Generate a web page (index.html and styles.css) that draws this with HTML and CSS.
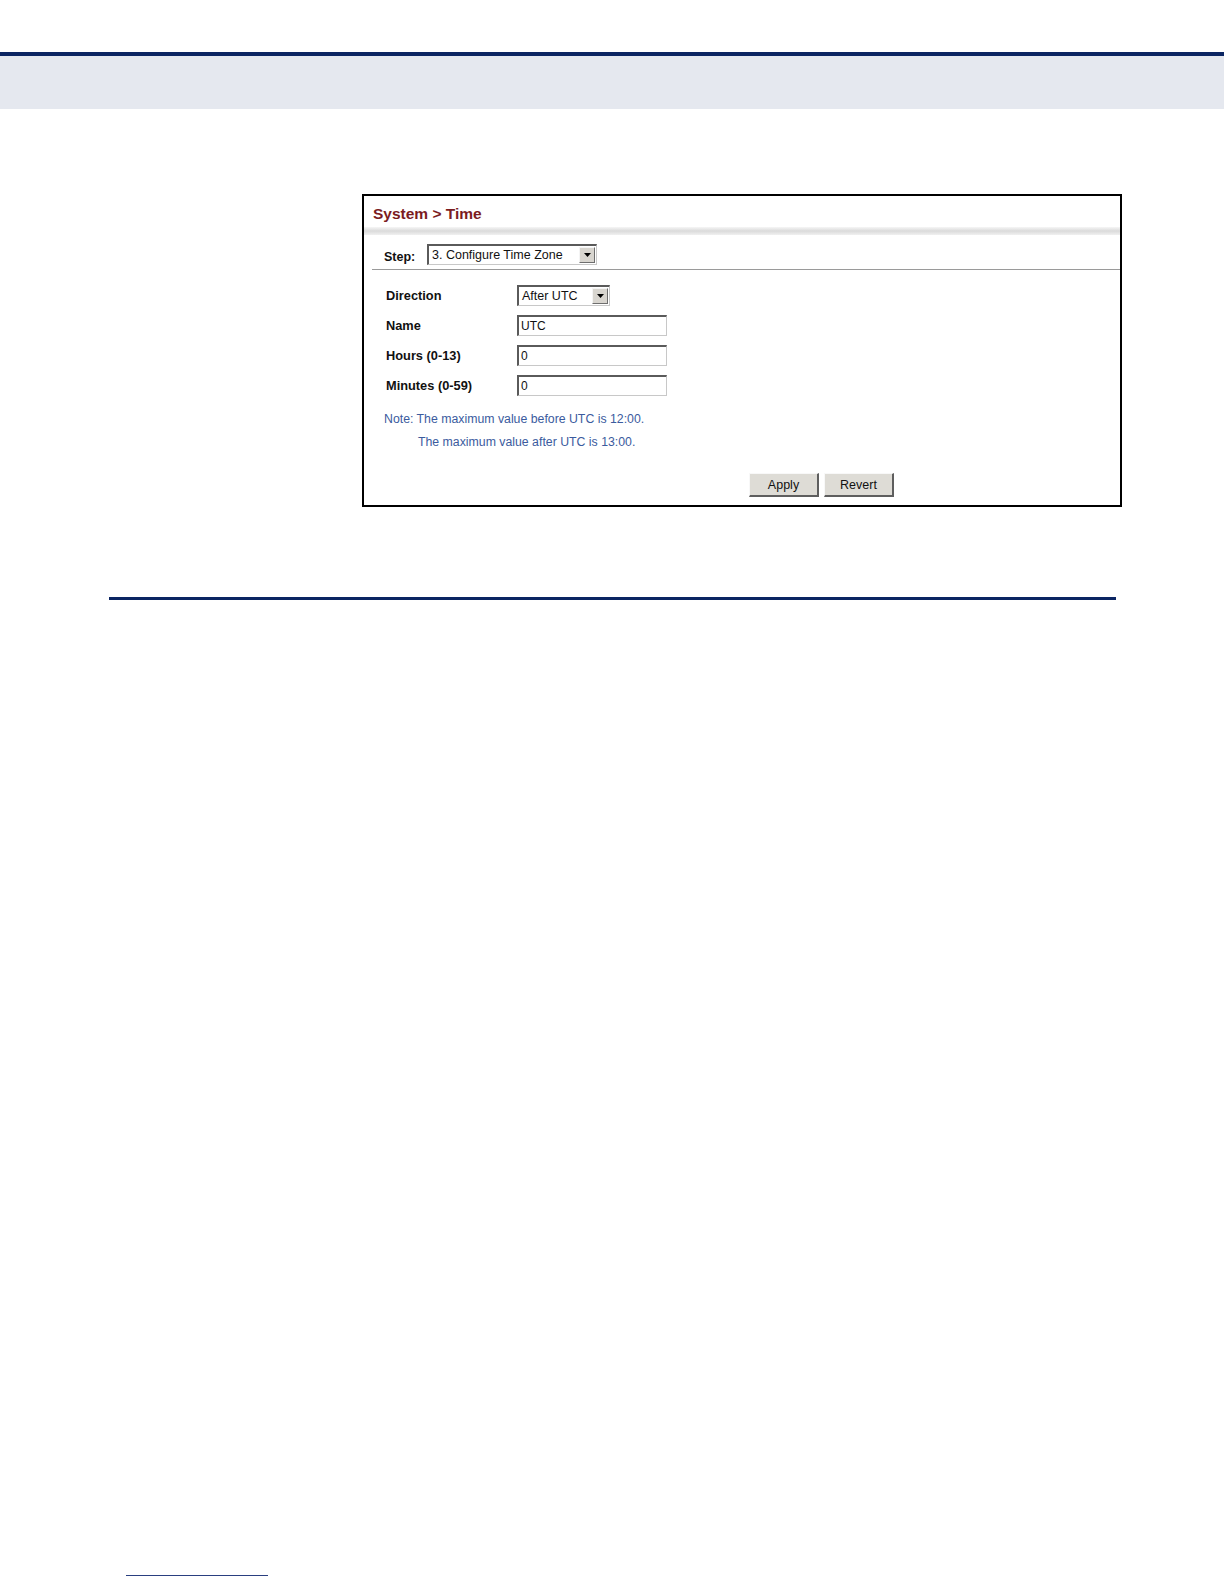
FILE: index.html
```html
<!DOCTYPE html>
<html>
<head>
<meta charset="utf-8">
<title>System &gt; Time</title>
<link rel="stylesheet" href="styles.css">
</head>
<body>
<header class="page-header">
  <div class="header-band"></div>
</header>
<main class="content">
  <div class="figure">
    <div class="panel-title">System &gt; Time</div>
    <div class="title-band"></div>
    <div class="step-row">
      <span class="step-label">Step:</span>
      <div class="select step-select">
        <span class="select-text">3. Configure Time Zone</span>
        <span class="select-btn"><svg width="7" height="4" viewBox="0 0 7 4"><path d="M0 0H7L3.5 4Z" fill="#000"/></svg></span>
      </div>
    </div>
    <div class="divider"></div>
    <div class="form">
      <div class="form-label">Direction</div>
      <div class="select dir-select">
        <span class="select-text">After UTC</span>
        <span class="select-btn"><svg width="7" height="4" viewBox="0 0 7 4"><path d="M0 0H7L3.5 4Z" fill="#000"/></svg></span>
      </div>
      <div class="form-label">Name</div>
      <div class="input">UTC</div>
      <div class="form-label">Hours (0-13)</div>
      <div class="input">0</div>
      <div class="form-label">Minutes (0-59)</div>
      <div class="input">0</div>
    </div>
    <div class="note">
      <div class="note-line">Note: The maximum value before UTC is 12:00.</div>
      <div class="note-line indent">The maximum value after UTC is 13:00.</div>
    </div>
    <div class="buttons">
      <button class="btn">Apply</button>
      <button class="btn">Revert</button>
    </div>
  </div>
  <div class="section-rule"></div>
</main>
<footer class="page-footer">
  <div class="footer-rule"></div>
</footer>
</body>
</html>
```

FILE: styles.css
```css
html, body {
  margin: 0;
  padding: 0;
  background: #ffffff;
}
body {
  width: 1224px;
  height: 1584px;
  font-family: "Liberation Sans", Arial, sans-serif;
  overflow: hidden;
}
.page-header {
  margin-top: 52px;
  border-top: 4px solid #0b2562;
}
.header-band {
  height: 53px;
  background: #e5e8ef;
}
.content {
  padding-top: 85px;
}
.figure {
  margin-left: 362px;
  width: 756px;
  border: 2px solid #000;
  display: flex;
  flex-direction: column;
}
.panel-title {
  padding: 8px 0 3px 9px;
  line-height: 20px;
  font-size: 15.5px;
  font-weight: bold;
  color: #7b1c1f;
}
.title-band {
  height: 8px;
  background: linear-gradient(#f6f6f6, #dadada 50%, #f0f0f0);
}
.step-row {
  margin-top: 9px;
  height: 21px;
  display: flex;
  align-items: center;
  padding-left: 20px;
}
.step-label {
  width: 43px;
  font-size: 12.5px;
  font-weight: bold;
  color: #111;
  padding-top: 4px;
}
.select {
  box-sizing: border-box;
  height: 21px;
  border-top: 2px solid #5a5a5a;
  border-left: 2px solid #5a5a5a;
  border-right: 1px solid #c8c8c8;
  border-bottom: 1px solid #c8c8c8;
  display: flex;
  align-items: center;
  justify-content: space-between;
  background: #fff;
}
.step-select { width: 170px; }
.dir-select { width: 93px; }
.select-text {
  font-size: 12.5px;
  color: #111;
  padding-left: 3px;
  white-space: nowrap;
}
.select-btn {
  box-sizing: border-box;
  width: 16px;
  height: 16px;
  margin-right: 1px;
  background: #d8d5cf;
  border-top: 1px solid #f4f4f4;
  border-left: 1px solid #f4f4f4;
  border-right: 1px solid #6e6e6e;
  border-bottom: 1px solid #6e6e6e;
  display: flex;
  align-items: center;
  justify-content: center;
}
.divider {
  margin: 4px 0 0 8px;
  height: 1px;
  background: #9a9a9a;
}
.form {
  margin-top: 15px;
  padding-left: 22px;
  display: grid;
  grid-template-columns: 131px 150px;
  grid-auto-rows: 21px;
  row-gap: 9px;
  align-items: center;
}
.form-label {
  font-size: 12.8px;
  font-weight: bold;
  color: #111;
}
.input {
  box-sizing: border-box;
  width: 150px;
  height: 21px;
  border-top: 2px solid #5a5a5a;
  border-left: 2px solid #5a5a5a;
  border-right: 1px solid #c8c8c8;
  border-bottom: 1px solid #c8c8c8;
  font-size: 12px;
  line-height: 18px;
  padding-left: 2px;
  color: #111;
}
.note {
  margin-top: 12px;
  padding-left: 20px;
  font-size: 12.3px;
  line-height: 23px;
  color: #3b5b9e;
}
.note-line.indent {
  padding-left: 34px;
}
.buttons {
  margin: 19px 0 8px 385px;
  display: flex;
  gap: 5px;
}
.btn {
  box-sizing: border-box;
  width: 70px;
  height: 24px;
  padding: 0;
  font-family: "Liberation Sans", Arial, sans-serif;
  font-size: 12.5px;
  color: #111;
  background: #dedcd6;
  border-top: 1px solid #f8f8f8;
  border-left: 1px solid #f8f8f8;
  border-right: 2px solid #5e5e5e;
  border-bottom: 2px solid #5e5e5e;
}
.section-rule {
  margin: 90px 0 0 109px;
  width: 1007px;
  height: 3px;
  background: #0b2562;
}
.page-footer {
  padding-top: 975px;
}
.footer-rule {
  margin-left: 126px;
  width: 142px;
  height: 1px;
  background: #2a3f80;
}
```
